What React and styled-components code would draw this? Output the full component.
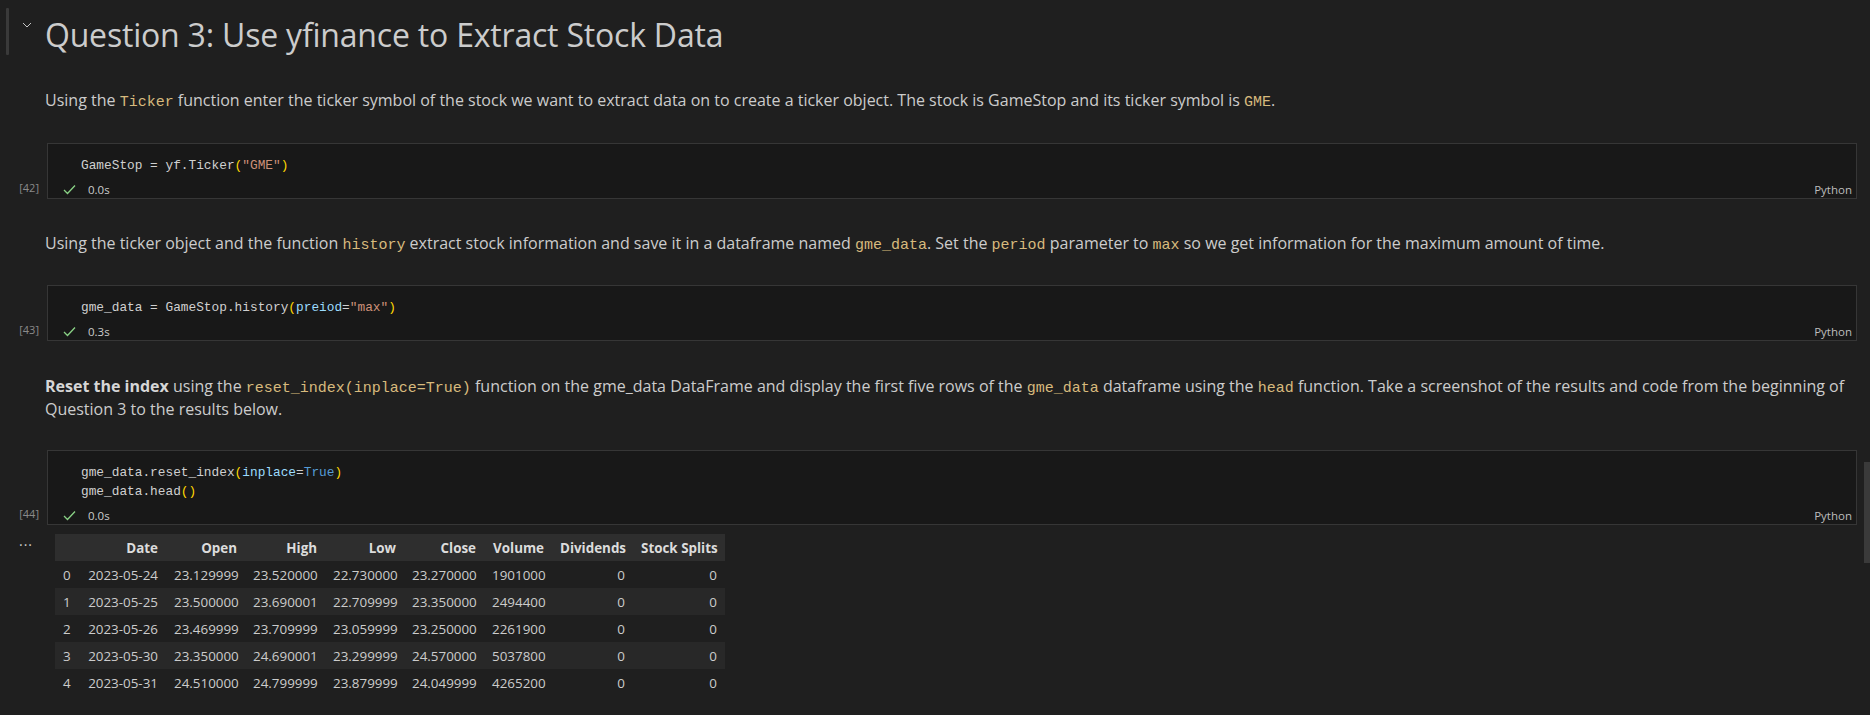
import React from 'react';
import styled, { createGlobalStyle } from 'styled-components';

const GlobalStyle = createGlobalStyle`
  html, body {
    margin: 0;
    padding: 0;
    background: #1f1f1f;
    overflow: hidden;
  }
`;

const Notebook = styled.div`
  position: relative;
  width: 1870px;
  height: 715px;
  background: #1f1f1f;
  color: #cccccc;
  font-family: "Open Sans", "Noto Sans", sans-serif;
`;

const HeadingCell = styled.div`
  display: flex;
  align-items: flex-start;
  padding-top: 8px;
`;

const FocusBar = styled.div`
  width: 3px;
  height: 47px;
  margin-left: 6px;
  background: #3a3a3a;
  border-radius: 1px;
`;

const Chevron = styled.div`
  width: 36px;
  display: flex;
  justify-content: center;
  padding-top: 14px;
  color: #c5c5c5;
`;

const Heading = styled.h2`
  margin: 6px 0 0 0;
  font-size: 32px;
  line-height: 42px;
  font-weight: 400;
  color: #cccccc;
  letter-spacing: -0.2px;
`;

const Markdown = styled.p`
  margin: ${p => p.$top}px 13px ${p => p.$bottom}px 45px;
  font-size: 16px;
  line-height: 23px;
  color: #cccccc;

  b {
    font-weight: 700;
    color: #d6d6d6;
  }
`;

const InlineCode = styled.code`
  font-family: "Liberation Mono", "DejaVu Sans Mono", monospace;
  font-size: 15px;
  line-height: 1;
  color: #d7ba7d;
`;

const CellRow = styled.div`
  display: flex;
  align-items: stretch;
  padding-right: 13px;
`;

const Gutter = styled.div`
  width: 47px;
  flex: none;
  display: flex;
  align-items: flex-end;
  justify-content: flex-end;
  box-sizing: border-box;
  padding: 0 8px 4px 0;
  font-size: 11px;
  color: #8a8a8a;
`;

const CodeBox = styled.div`
  flex: 1;
  background: #181818;
  border: 1px solid #363636;
  padding-top: 12px;
`;

const CodeLine = styled.div`
  padding-left: 33px;
  font-family: "Liberation Mono", "DejaVu Sans Mono", monospace;
  font-size: 12.8px;
  line-height: 19px;
  height: 19px;
  color: #d0d0d0;
  white-space: pre;
`;

const Tok = styled.span`
  color: ${p => p.$c};
`;

const StatusRow = styled.div`
  display: flex;
  align-items: center;
  height: 18px;
  margin-top: 5px;
  padding: 0 4px 0 15px;
  font-size: 11.5px;
`;

const Check = styled.span`
  display: inline-flex;
  margin-right: 12px;
`;

const Duration = styled.span`
  color: #cccccc;
`;

const Lang = styled.span`
  margin-left: auto;
  color: #bdbdbd;
`;

const OutputRow = styled.div`
  display: flex;
  margin-top: 9px;
`;

const OutputGutter = styled.div`
  width: 55px;
  flex: none;
  box-sizing: border-box;
  padding-left: 19px;
  font-size: 14px;
  line-height: 14px;
  letter-spacing: 1px;
  color: #cccccc;
`;

const Table = styled.table`
  border-collapse: collapse;
  table-layout: fixed;
  width: 670px;
  font-size: 13.4px;
  color: #cccccc;
`;

const HeadRow = styled.tr`
  background: #2e2e2e;
`;

const Row = styled.tr`
  background: ${p => (p.$striped ? '#282828' : 'transparent')};
`;

const Th = styled.th`
  height: 27px;
  padding: 0 8px;
  text-align: right;
  font-weight: 700;
  color: #dcdcdc;
  white-space: nowrap;
`;

const Td = styled.td`
  height: 27px;
  padding: 0 ${p => (p.$index ? '4px' : '8px')} 0 8px;
  text-align: ${p => (p.$index ? 'left' : 'right')};
  white-space: nowrap;
`;

const Scrollbar = styled.div`
  position: absolute;
  right: 0;
  top: 462px;
  width: 6px;
  height: 101px;
  background: #3a3a3a;
`;

const Y = '#ffd700';
const S = '#ce9178';
const V = '#9cdcfe';
const K = '#569cd6';

const colWidths = [23, 88, 79, 80, 79, 80, 68, 81, 92];
const headers = ['', 'Date', 'Open', 'High', 'Low', 'Close', 'Volume', 'Dividends', 'Stock Splits'];
const rows = [
  ['0', '2023-05-24', '23.129999', '23.520000', '22.730000', '23.270000', '1901000', '0', '0'],
  ['1', '2023-05-25', '23.500000', '23.690001', '22.709999', '23.350000', '2494400', '0', '0'],
  ['2', '2023-05-26', '23.469999', '23.709999', '23.059999', '23.250000', '2261900', '0', '0'],
  ['3', '2023-05-30', '23.350000', '24.690001', '23.299999', '24.570000', '5037800', '0', '0'],
  ['4', '2023-05-31', '24.510000', '24.799999', '23.879999', '24.049999', '4265200', '0', '0'],
];

function CheckIcon() {
  return (
    <svg width="13" height="11" viewBox="0 0 13 11" fill="none">
      <path d="M1 6 L4.5 9.5 L12 1.5" stroke="#89d185" strokeWidth="1.3" />
    </svg>
  );
}

function CodeCell({ count, time, lines }) {
  return (
    <CellRow>
      <Gutter>[{count}]</Gutter>
      <CodeBox>
        {lines.map((line, i) => (
          <CodeLine key={i}>{line}</CodeLine>
        ))}
        <StatusRow>
          <Check><CheckIcon /></Check>
          <Duration>{time}</Duration>
          <Lang>Python</Lang>
        </StatusRow>
      </CodeBox>
    </CellRow>
  );
}

export default function App() {
  return (
    <Notebook>
      <GlobalStyle />
      <HeadingCell>
        <FocusBar />
        <Chevron>
          <svg width="10" height="6" viewBox="0 0 10 6" fill="none">
            <path d="M1 1 L5 5 L9 1" stroke="#c5c5c5" strokeWidth="1" />
          </svg>
        </Chevron>
        <Heading>Question 3: Use yfinance to Extract Stock Data</Heading>
      </HeadingCell>

      <Markdown $top={33} $bottom={31}>
        Using the <InlineCode>Ticker</InlineCode> function enter the ticker symbol of the stock we want to extract data on to create a ticker object. The stock is GameStop and its ticker symbol is <InlineCode>GME</InlineCode>.
      </Markdown>

      <CodeCell
        count={42}
        time="0.0s"
        lines={[
          <>GameStop = yf.Ticker<Tok $c={Y}>(</Tok><Tok $c={S}>"GME"</Tok><Tok $c={Y}>)</Tok></>,
        ]}
      />

      <Markdown $top={33} $bottom={30}>
        Using the ticker object and the function <InlineCode>history</InlineCode> extract stock information and save it in a dataframe named <InlineCode>gme_data</InlineCode>. Set the <InlineCode>period</InlineCode> parameter to <InlineCode>max</InlineCode> so we get information for the maximum amount of time.
      </Markdown>

      <CodeCell
        count={43}
        time="0.3s"
        lines={[
          <>gme_data = GameStop.history<Tok $c={Y}>(</Tok><Tok $c={V}>preiod</Tok>=<Tok $c={S}>"max"</Tok><Tok $c={Y}>)</Tok></>,
        ]}
      />

      <Markdown $top={34} $bottom={29}>
        <b>Reset the index</b> using the <InlineCode>reset_index(inplace=True)</InlineCode> function on the gme_data DataFrame and display the first five rows of the <InlineCode>gme_data</InlineCode> dataframe using the <InlineCode>head</InlineCode> function. Take a screenshot of the results and code from the beginning of Question 3 to the results below.
      </Markdown>

      <CodeCell
        count={44}
        time="0.0s"
        lines={[
          <>gme_data.reset_index<Tok $c={Y}>(</Tok><Tok $c={V}>inplace</Tok>=<Tok $c={K}>True</Tok><Tok $c={Y}>)</Tok></>,
          <>gme_data.head<Tok $c={Y}>()</Tok></>,
        ]}
      />

      <OutputRow>
        <OutputGutter>...</OutputGutter>
        <Table>
          <colgroup>
            {colWidths.map((w, i) => <col key={i} style={{ width: w }} />)}
          </colgroup>
          <thead>
            <HeadRow>
              {headers.map((h, i) => <Th key={i}>{h}</Th>)}
            </HeadRow>
          </thead>
          <tbody>
            {rows.map((r, i) => (
              <Row key={i} $striped={i % 2 === 1}>
                {r.map((c, j) => <Td key={j} $index={j === 0}>{c}</Td>)}
              </Row>
            ))}
          </tbody>
        </Table>
      </OutputRow>

      <Scrollbar />
    </Notebook>
  );
}
